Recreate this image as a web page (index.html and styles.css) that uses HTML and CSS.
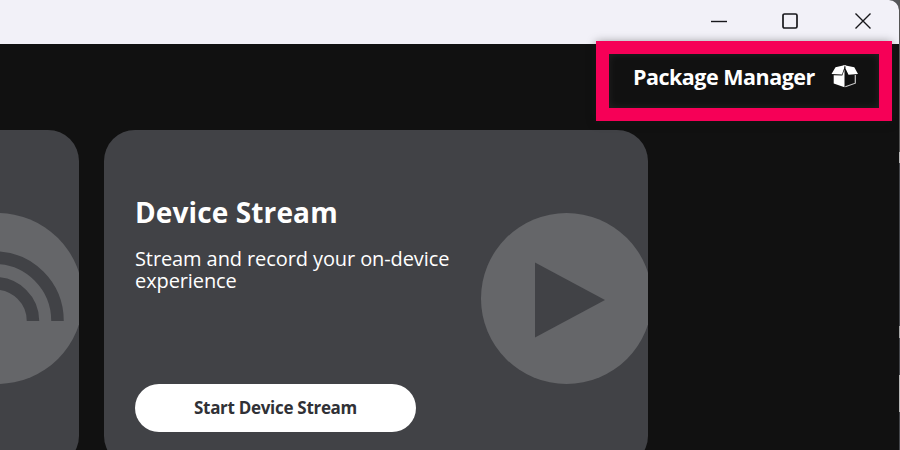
FILE: index.html
```
<!DOCTYPE html>
<html lang="en">
<head>
<meta charset="utf-8">
<title>Device Stream</title>
<link rel="stylesheet" href="styles.css">
</head>
<body>
<div class="window">
  <header class="titlebar">
    <svg class="control" viewBox="0 0 18 18"><path d="M1 9.5H17"/></svg>
    <svg class="control square" viewBox="0 0 18 18"><rect x="2" y="2" width="14" height="14" rx="1.5"/></svg>
    <svg class="control" viewBox="0 0 18 18"><path d="M1.5 1.5L16.5 16.5M16.5 1.5L1.5 16.5"/></svg>
  </header>
  <nav class="toolbar">
    <div class="package">
      <span class="package-label">Package Manager</span>
      <svg class="package-icon" viewBox="0 0 28 24">
        <path fill="#fff" d="M.5 9L4.500 2.300L13.200 .3V3L11 9.400zM14.500 .5L23.300 2.300L27 9L17.500 9.800L14.500 3.500zM2.700 10.200L11.300 10.500L13.500 4.500V22.300L2.700 18.500z"/>
        <path fill="none" stroke="#ccc" d="M14.300 21.800L24.300 18.200V10" stroke-width="1.2"/>
        <path fill="none" stroke="#fff" d="M12.500 .8H15" stroke-width="1"/>
      </svg>
    </div>
  </nav>
  <main class="cards">
    <section class="card">
      <svg class="art" viewBox="0 0 171 171">
        <circle cx="85.5" cy="85.5" r="85.5"/>
        <path class="wave" d="M20.5 108A62.500 63.300 0 0 1 145.500 108M45 108A38 37.700 0 0 1 121 108"/>
      </svg>
    </section>
    <section class="card">
      <div class="copy">
        <h1>Device Stream</h1>
        <p>Stream and record your on-device<br>experience</p>
        <button class="start"><span>Start Device Stream</span></button>
      </div>
      <svg class="art" viewBox="0 0 171 171">
        <circle cx="85.5" cy="85.5" r="85.5"/>
        <path class="play" d="M54 49.500L124 87L54 124.500z"/>
      </svg>
    </section>
  </main>
</div>
<aside class="desktop"></aside>
</body>
</html>
```
FILE: styles.css
```
* { box-sizing: border-box; }
body {
  margin: 0;
  width: 900px;
  height: 450px;
  overflow: hidden;
  display: flex;
  background: #55575a;
  font-family: "Open Sans", "Noto Sans", sans-serif;
}
.window {
  width: 899px;
  height: 450px;
  flex: none;
  overflow: hidden;
  background: #111;
  border-top-right-radius: 10px;
}
.titlebar {
  height: 44px;
  padding: 0 27px 2px 0;
  display: flex;
  justify-content: flex-end;
  align-items: center;
  gap: 54px;
  background: #f2f1f8;
}
.control {
  width: 18px;
  height: 18px;
  fill: none;
  stroke: #17171b;
  stroke-width: 1.4;
}
.square { stroke-width: 1.7; margin: 0 1px 0 -1px; }
.toolbar {
  height: 86px;
  display: flex;
  justify-content: flex-end;
  padding-right: 7px;
}
.package {
  width: 296px;
  height: 80px;
  margin-top: -3px;
  position: relative;
  border: 13px solid #f60057;
  display: flex;
  align-items: center;
  padding: 0 20px 9px 24px;
  justify-content: space-between;
  color: #fff;
  background: #111;
  box-shadow: 0 1px 9px #0006, 0 0 9px #ffffff12, inset 0 0 9px #ffffff14;
}
.package-label {
  font-size: 21.500px;
  font-weight: 700;
  letter-spacing: -.5px;
  line-height: 30px;
  white-space: nowrap;
}
.package-icon { width: 28px; height: 24px; }
.cards {
  display: flex;
  gap: 25px;
  margin-left: -465px;
}
.card {
  width: 544px;
  height: 337px;
  flex: none;
  border-radius: 31px;
  overflow: hidden;
  background: #414246;
  padding: 66px 0 0 31px;
  display: flex;
  justify-content: flex-end;
}
.copy { width: 345px; flex: none; }
h1 {
  margin: 0;
  color: #fff;
  font-size: 28px;
  line-height: 32px;
  letter-spacing: .12px;
  white-space: nowrap;
}
p {
  margin: 20px 0 0;
  color: #fff;
  font-size: 20px;
  line-height: 22px;
  letter-spacing: -.1px;
  white-space: nowrap;
}
.start {
  width: 281px;
  height: 48px;
  margin: 92px 0 0;
  padding: 0 0 1px 0;
  border: 0;
  border-radius: 24px;
  background: #fff;
  color: #303136;
  font: 700 17px/24px "Open Sans", sans-serif;
  letter-spacing: -.3px;
}
.art {
  width: 171px;
  height: 171px;
  margin: 17px -4px 0 auto;
  flex: none;
  fill: #656669;
}
.wave { fill: none; stroke: #414246; stroke-width: 12.500; }
.play { fill: #414246; }
.desktop {
  width: 1px;
  height: 450px;
  background: linear-gradient(#555 0 152px, #bbb 152px 163px, #45474b 163px 326px, #aaa 326px 338px, #45474b 338px 375px, #bbb 375px 412px, #45474b 412px);
}
```
